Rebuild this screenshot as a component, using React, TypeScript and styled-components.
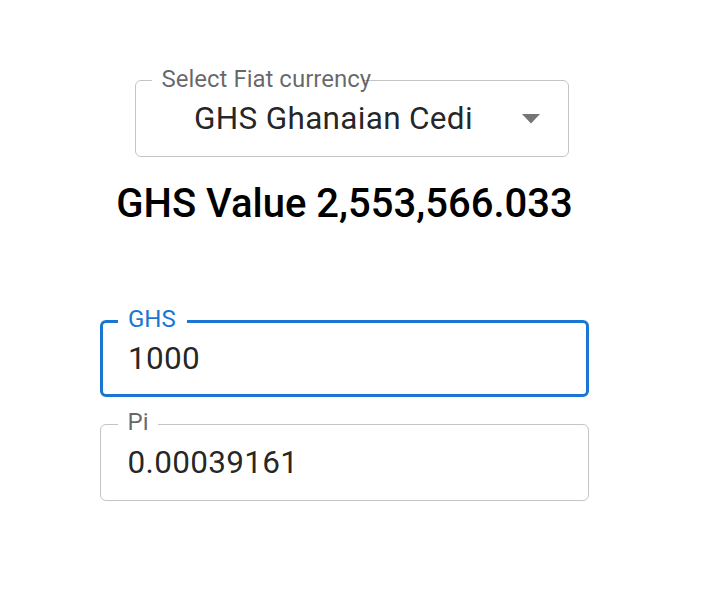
import styled, { createGlobalStyle } from 'styled-components'

const GlobalStyle = createGlobalStyle`
  html, body {
    margin: 0;
    padding: 0;
    background: #ffffff;
  }

  body {
    font-family: Roboto, "Noto Sans", "Liberation Sans", sans-serif;
    color: rgba(0, 0, 0, 0.87);
  }
`

const Page = styled.div`
  width: 709px;
  height: 592px;
  padding: 80px 0 0 100px;
  box-sizing: border-box;
`

const Converter = styled.div`
  width: 489px;
  display: flex;
  flex-direction: column;
`

const Outline = styled.div<{ $focused?: boolean }>`
  position: relative;
  height: 77px;
  box-sizing: border-box;
  border: ${p => (p.$focused ? '3px solid #1976d2' : '1.5px solid #c4c4c4')};
  border-radius: 6px;
  display: flex;
  align-items: center;
`

const SelectBox = styled(Outline)`
  width: 434px;
  margin-left: 35px;
  padding: 0 28px 0 58px;
`

const FieldLabel = styled.label<{ $focused?: boolean; $notch: number; $left: number; $top: number }>`
  position: absolute;
  top: ${p => p.$top}px;
  left: ${p => p.$left}px;
  width: ${p => p.$notch}px;
  padding-left: 10px;
  box-sizing: border-box;
  height: 24px;
  background: #ffffff;
  font-size: 24px;
  line-height: 24px;
  white-space: nowrap;
  color: ${p => (p.$focused ? '#1976d2' : 'rgba(0, 0, 0, 0.6)')};
`

const SelectValue = styled.div`
  flex: 1;
  font-size: 31.5px;
  line-height: 1.2;
  letter-spacing: 0.01em;
`

const Heading = styled.h2`
  margin: 23px 0 0;
  text-align: center;
  font-size: 40px;
  font-weight: 500;
  line-height: 48px;
  color: #000;
`

const Fields = styled.div`
  margin-top: 92px;
  display: flex;
  flex-direction: column;
  gap: 27px;
`

const Input = styled.input<{ $focused?: boolean }>`
  width: 100%;
  border: none;
  outline: none;
  background: transparent;
  padding: 0 0 0 ${p => (p.$focused ? 25 : 26.5)}px;
  font-family: inherit;
  font-size: 31.5px;
  letter-spacing: 0.01em;
  color: rgba(0, 0, 0, 0.87);
`

const DropArrow = () => (
  <svg width="18" height="10" viewBox="0 0 18 10">
    <path d="M0 0 L9 9.5 L18 0 Z" fill="#757575" />
  </svg>
)

interface TextFieldProps {
  label: string
  value: string
  notch: number
  focused?: boolean
}

const TextField = ({ label, value, notch, focused = false }: TextFieldProps) => {
  return (
    <Outline $focused={focused}>
      <FieldLabel
        $focused={focused}
        $notch={notch}
        $left={focused ? 15 : 16.5}
        $top={focused ? -16 : -15}
      >
        {label}
      </FieldLabel>
      <Input $focused={focused} defaultValue={value} />
    </Outline>
  )
}

const App = () => {
  return (
    <>
      <GlobalStyle />
      <Page>
        <Converter>
          <SelectBox>
            <FieldLabel $notch={211} $left={15.5} $top={-14}>
              Select Fiat currency
            </FieldLabel>
            <SelectValue>GHS Ghanaian Cedi</SelectValue>
            <DropArrow />
          </SelectBox>
          <Heading>GHS Value 2,553,566.033</Heading>
          <Fields>
            <TextField label="GHS" value="1000" notch={69} focused />
            <TextField label="Pi" value="0.00039161" notch={40} />
          </Fields>
        </Converter>
      </Page>
    </>
  )
}

export default App
